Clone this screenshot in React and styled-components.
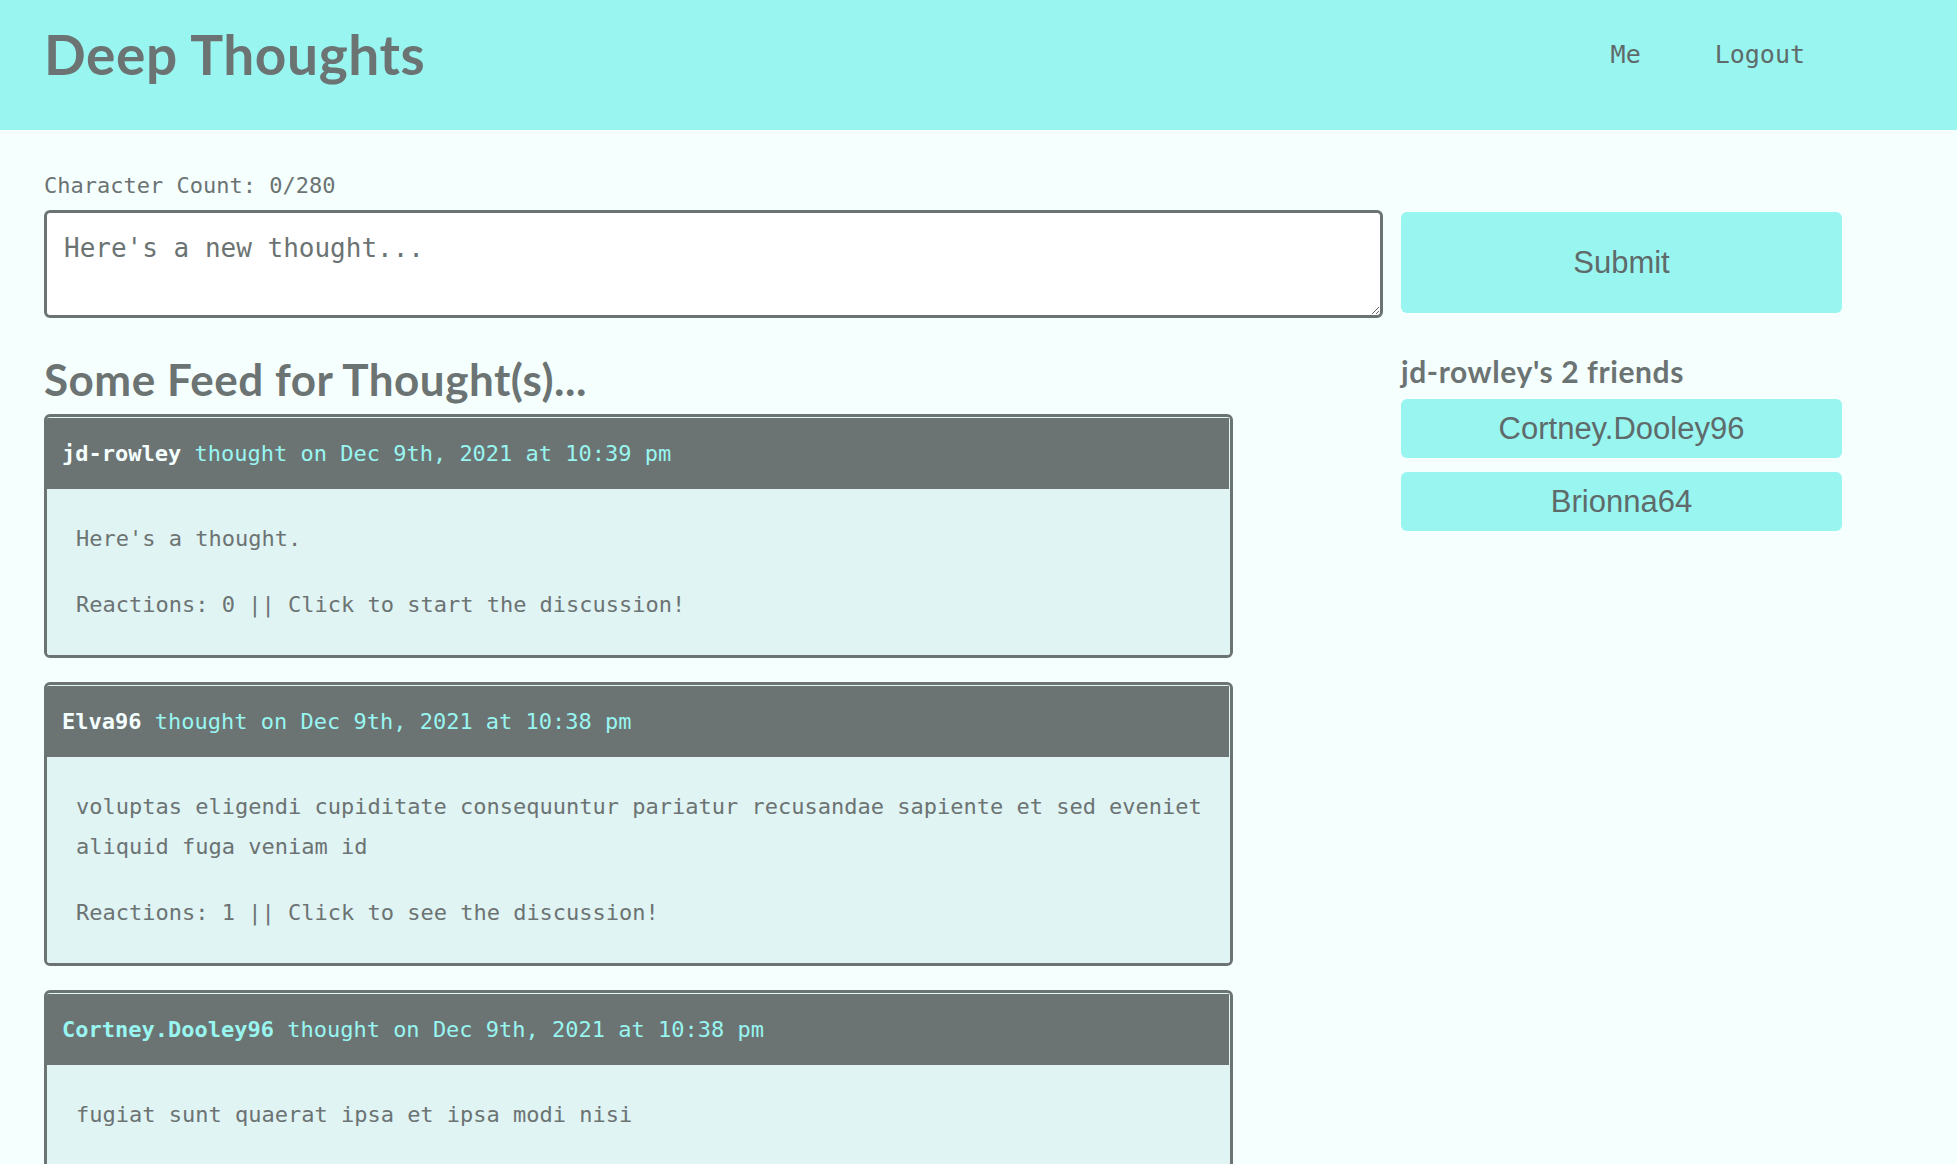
import React, { useState } from "react";
import styled, { createGlobalStyle } from "styled-components";

const GlobalStyle = createGlobalStyle`
  body {
    margin: 0;
    background: #f4fffe;
    color: #6c7373;
    font-family: "DejaVu Sans Mono", "Liberation Mono", monospace;
  }
`;

const Header = styled.header`
  height: 130px;
  background: #98f5f0;
  display: flex;
  align-items: center;
  justify-content: space-between;
  padding: 0 152px 0 44px;
  box-sizing: border-box;
`;

const Title = styled.h1`
  margin: -22px 0 0;
  font-family: Lato, "Open Sans", sans-serif;
  font-weight: 700;
  font-size: 55px;
  color: #6c7373;
  letter-spacing: 0.6px;
`;

const Nav = styled.nav`
  display: flex;
  gap: 74px;
  margin-top: -22px;
`;

const NavLink = styled.a`
  font-size: 25px;
  color: #5f6a6a;
  text-decoration: none;
  cursor: pointer;
`;

const Main = styled.main`
  padding: 0 115px 0 44px;
`;

const Counter = styled.p`
  font-size: 22px;
  margin: 0;
  padding-top: 43px;
  line-height: 26px;
  color: #6c7373;
`;

const FormRow = styled.form`
  display: grid;
  grid-template-columns: 1fr 441px;
  gap: 18px;
  margin-top: 11px;
  align-items: start;
`;

const TextArea = styled.textarea`
  box-sizing: border-box;
  height: 108px;
  width: 100%;
  border: 3px solid #6c7373;
  border-radius: 6px;
  background: #fff;
  padding: 20px 17px;
  font-family: "DejaVu Sans Mono", monospace;
  font-size: 26px;
  color: #6c7373;
  &::placeholder {
    color: #6c7373;
  }
`;

const Button = styled.button`
  box-sizing: border-box;
  width: 100%;
  height: ${(p) => p.$h}px;
  border: none;
  border-radius: 6px;
  background: #98f5f0;
  color: #5f6a6a;
  font-family: "Liberation Sans", Arial, sans-serif;
  font-size: 31px;
  cursor: pointer;
  margin-top: ${(p) => p.$mt || 0}px;
`;

const Columns = styled.div`
  display: grid;
  grid-template-columns: 1fr 441px;
  gap: 18px;
`;

const FeedHeading = styled.h3`
  font-family: Lato, "Open Sans", sans-serif;
  font-weight: 700;
  font-size: 44px;
  letter-spacing: 0.5px;
  margin: 36px 0 10px;
  line-height: 50px;
  color: #6c7373;
`;

const Card = styled.div`
  width: 1189px;
  box-sizing: border-box;
  border: 3px solid #6c7373;
  border-radius: 6px;
  overflow: hidden;
  margin-bottom: 24px;
`;

const CardHeader = styled.p`
  margin: 0;
  background: #6c7373;
  border-top: 1px solid #dff7f6;
  border-right: 1px solid #dff7f6;
  padding: 19px 15px 18px;
  font-size: 22px;
  line-height: 34px;
  color: #98f5f0;
`;

const User = styled.span`
  font-weight: 700;
  color: ${(p) => (p.$visited ? "#98f5f0" : "#f4ffff")};
`;

const CardBody = styled.div`
  background: #e0f4f3;
  padding: 4px 12px 4px 29px;
`;

const Para = styled.p`
  margin: 26px 0;
  font-size: 22px;
  line-height: 40px;
  color: #6c7373;
`;

const FriendHeading = styled.h5`
  font-family: Lato, "Open Sans", sans-serif;
  font-weight: 700;
  font-size: 30px;
  letter-spacing: 0.6px;
  margin: 37px 0 12px;
  line-height: 32px;
  color: #6c7373;
`;

const FriendList = styled.div`
  display: flex;
  flex-direction: column;
  gap: 14px;
`;

const thoughts = [
  {
    user: "jd-rowley",
    date: "Dec 9th, 2021 at 10:39 pm",
    text: "Here's a thought.",
    reactions: 0,
  },
  {
    user: "Elva96",
    date: "Dec 9th, 2021 at 10:38 pm",
    text: "voluptas eligendi cupiditate consequuntur pariatur recusandae sapiente et sed eveniet aliquid fuga veniam id",
    reactions: 1,
  },
  {
    user: "Cortney.Dooley96",
    date: "Dec 9th, 2021 at 10:38 pm",
    text: "fugiat sunt quaerat ipsa et ipsa modi nisi",
    reactions: 0,
    visited: true,
  },
];

const friends = ["Cortney.Dooley96", "Brionna64"];

function App() {
  const [text, setText] = useState("");

  return (
    <>
      <GlobalStyle />
      <Header>
        <Title>Deep Thoughts</Title>
        <Nav>
          <NavLink>Me</NavLink>
          <NavLink>Logout</NavLink>
        </Nav>
      </Header>
      <Main>
        <Counter>Character Count: {text.length}/280</Counter>
        <FormRow onSubmit={(e) => e.preventDefault()}>
          <TextArea
            placeholder="Here's a new thought..."
            value={text}
            onChange={(e) => setText(e.target.value.slice(0, 280))}
          />
          <Button type="submit" $h={101} $mt={2}>
            Submit
          </Button>
        </FormRow>
        <Columns>
          <section>
            <FeedHeading>Some Feed for Thought(s)...</FeedHeading>
            {thoughts.map((t) => (
              <Card key={t.user}>
                <CardHeader>
                  <User $visited={t.visited}>{t.user}</User> thought on {t.date}
                </CardHeader>
                <CardBody>
                  <Para>{t.text}</Para>
                  <Para>
                    Reactions: {t.reactions} || Click to{" "}
                    {t.reactions ? "see" : "start"} the discussion!
                  </Para>
                </CardBody>
              </Card>
            ))}
          </section>
          <aside>
            <FriendHeading>jd-rowley's {friends.length} friends</FriendHeading>
            <FriendList>
              {friends.map((f) => (
                <Button key={f} $h={59}>
                  {f}
                </Button>
              ))}
            </FriendList>
          </aside>
        </Columns>
      </Main>
    </>
  );
}

export default App;
